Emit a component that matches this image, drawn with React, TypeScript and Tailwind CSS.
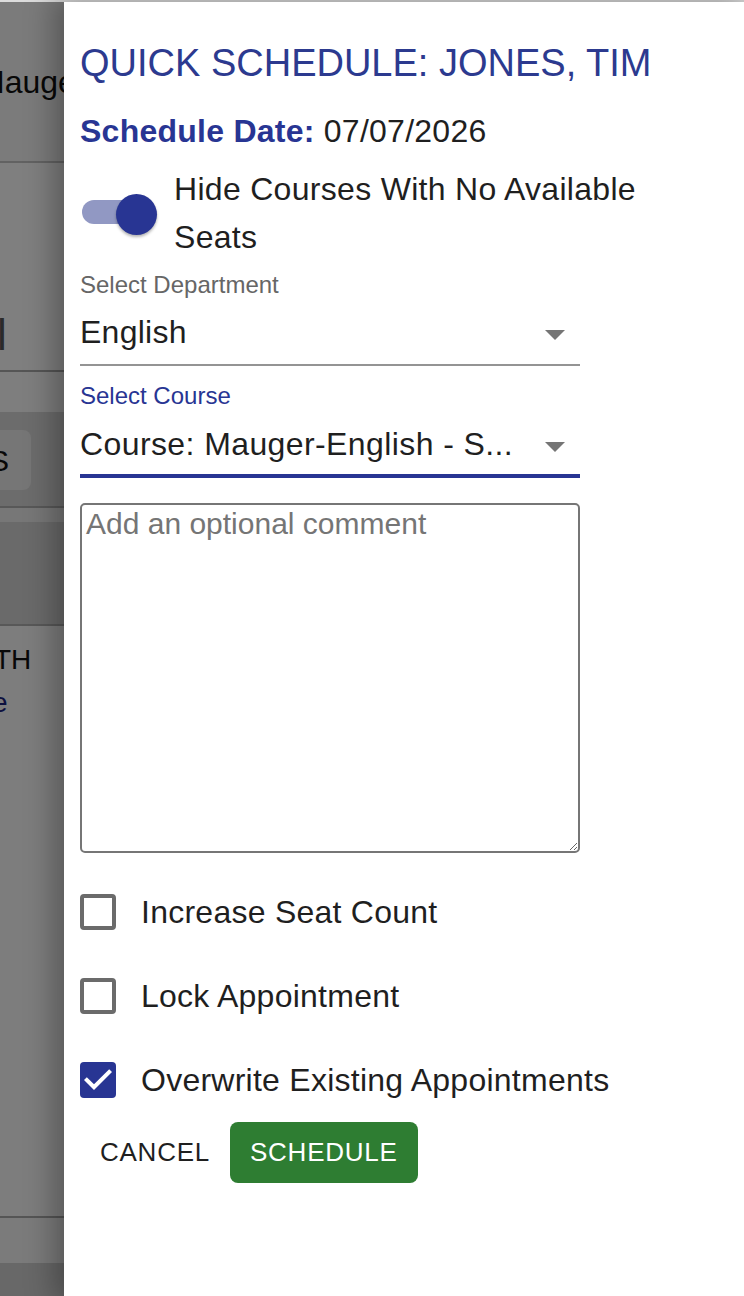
import React from "react";

const CheckboxRow = ({ label, checked, first }: { label: string; checked?: boolean; first?: boolean }) => (
	<div className={`flex h-[36px] items-center ${first ? "mt-[41px]" : "mt-[48px]"}`}>
		{checked ? (
			<svg width="36" height="36" viewBox="3 3 18 18" className="shrink-0">
				<rect x="3" y="3" width="18" height="18" rx="2" fill="#283593" />
				<path d="M10 17l-5-5 1.41-1.41L10 14.17l7.59-7.59L19 8l-9 9z" fill="#ffffff" />
			</svg>
		) : (
			<div className="h-[36px] w-[36px] shrink-0 rounded-[4px] border-[4px] border-[#6b6b6b]" />
		)}
		<span className="ml-[25px] text-[32px] leading-[36px] tracking-[0.25px] text-[#1f1f1f]">{label}</span>
	</div>
);

const Arrow = () => (
	<svg width="20" height="10" viewBox="0 0 20 10" className="mr-[15px] mt-[6px] shrink-0">
		<path d="M0 0h20L10 10z" fill="#757575" />
	</svg>
);

const App: React.FC = () => {
	return (
		<div className="flex h-[1296px] w-[744px] flex-col overflow-hidden bg-white font-['Liberation_Sans',Arial,sans-serif]">
			<div className="h-[2px] shrink-0 bg-[#dcdcdc]" />

			<div className="relative flex-1">
				{/* Page behind the drawer */}
				<div className="flex h-full flex-col text-[#111]">
					<div className="flex h-[161px] items-center border-b-2 border-[#c4c4c4] bg-[#f6f6f6]">
						<span className="-ml-[22px] whitespace-nowrap text-[32px] leading-[40px]">Mauger, Tim</span>
					</div>
					<div className="h-[209px] border-b-2 border-[#aaaaaa] bg-white pt-[148px]">
						<span className="-ml-[3px] block text-[44px] leading-[48px] text-[#555]">l</span>
					</div>
					<div className="h-[40px] bg-[#fcfcfc]" />
					<div className="h-[96px] border-b-2 border-[#b0b0b0] bg-[#d8d8d8] pt-[18px]">
						<div className="-ml-[29px] flex h-[60px] w-[60px] items-center justify-end rounded-[8px] bg-[#ececec] pr-[22px] text-[30px]">
							S
						</div>
					</div>
					<div className="h-[14px] bg-[#eeeeee]" />
					<div className="h-[104px] border-b-2 border-[#b0b0b0] bg-[#d4d4d4]" />
					<div className="h-[592px] border-b-2 border-[#aaaaaa] bg-[#fafafa] pt-[18px]">
						<div className="-ml-[6px] text-[28px] leading-[32px]">TH</div>
						<div className="-ml-[8px] mt-[11px] text-[28px] leading-[32px] text-[#1a237e]">e</div>
					</div>
					<div className="h-[45px] bg-[#f6f6f6]" />
					<div className="flex-1 bg-[#d0d0d0]" />
				</div>

				{/* Backdrop */}
				<div className="absolute inset-0 bg-black/50" />

				{/* Drawer */}
				<div className="absolute inset-y-0 left-[64px] right-0 bg-white pl-4 pt-[39px] shadow-[-4px_0_28px_6px_rgba(0,0,0,0.3)]">
					<h2 className="whitespace-nowrap text-[38px] leading-[44px] text-[#2c3a8f]">
						QUICK SCHEDULE: JONES, TIM
					</h2>
					<p className="mt-[26px] text-[32px] leading-[40px] tracking-[0.25px] text-[#1f1f1f]">
						<span className="font-bold text-[#283593]">Schedule Date:</span> 07/07/2026
					</p>

					{/* Toggle */}
					<div className="mt-[14px] flex items-center">
						<div className="relative h-[96px] w-[94px] shrink-0">
							<div className="absolute left-[2px] top-[35px] h-[24px] w-[68px] rounded-full bg-[#9198c3]" />
							<div className="absolute left-[36px] top-[29px] h-[41px] w-[41px] rounded-full bg-[#283593] shadow-[0_2px_3px_rgba(0,0,0,0.3)]" />
						</div>
						<span className="w-[540px] text-[32px] leading-[48px] tracking-[0.3px] text-[#1f1f1f]">
							Hide Courses With No Available Seats
						</span>
					</div>

					{/* Department */}
					<div className="mt-[10px] text-[24px] leading-[28px] text-[#666666]">Select Department</div>
					<div className="mt-[13px] flex w-[500px] items-center border-b-2 border-[#949494] pb-[12px]">
						<span className="flex-1 text-[32px] leading-[40px] tracking-[0.25px] text-[#1f1f1f]">English</span>
						<Arrow />
					</div>

					{/* Course */}
					<div className="mt-[16px] text-[24px] leading-[28px] text-[#283593]">Select Course</div>
					<div className="mt-[14px] flex w-[500px] items-center border-b-4 border-[#283593] pb-[10px]">
						<span className="flex-1 whitespace-nowrap text-[32px] leading-[40px] tracking-[0.4px] text-[#1f1f1f]">
							Course: Mauger-English - S...
						</span>
						<Arrow />
					</div>

					<textarea
						placeholder="Add an optional comment"
						className="mt-[25px] block h-[350px] w-[500px] rounded-[5px] border-2 border-[#767676] px-[4px] pt-[2px] text-[30px] leading-[34px] text-[#1f1f1f] placeholder:text-[#757575]"
					/>

					<CheckboxRow label="Increase Seat Count" first />
					<CheckboxRow label="Lock Appointment" />
					<CheckboxRow label="Overwrite Existing Appointments" checked />

					<div className="mt-[24px] flex items-center">
						<button className="ml-[4px] h-[61px] px-4 text-[26px] tracking-[0.75px] text-[#1f1f1f]">CANCEL</button>
						<button className="ml-[4px] h-[61px] rounded-[8px] bg-[#2e7d32] px-[20px] text-[26px] tracking-[0.75px] text-white">
							SCHEDULE
						</button>
					</div>
				</div>
			</div>
		</div>
	);
};

export default App;
